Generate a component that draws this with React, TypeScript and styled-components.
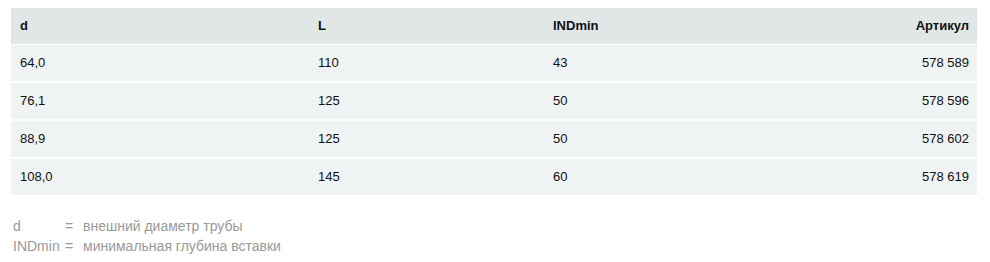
import React from 'react';
import styled, { createGlobalStyle } from 'styled-components';

const GlobalStyle = createGlobalStyle`
  body {
    margin: 0;
    background: #fff;
    font-family: "Liberation Sans", Arial, sans-serif;
  }
`;

const Page = styled.div`
  padding: 8px 13px 0 11px;
`;

const Table = styled.table`
  width: 966px;
  table-layout: fixed;
  border-collapse: collapse;
  font-size: 13px;
  color: #111;
`;

const HeadCell = styled.th<{ $right?: boolean; $width?: number }>`
  box-sizing: border-box;
  background: #e1e6e7;
  height: 36px;
  padding: 0 8px 0 9px;
  text-align: ${(p) => (p.$right ? 'right' : 'left')};
  font-weight: bold;
  width: ${(p) => (p.$width ? `${p.$width}px` : 'auto')};
  border-bottom: 1px solid #fff;
`;

const Row = styled.tr`
  background: #eff3f4;
  border-top: 2px solid #fff;
  &:first-child {
    border-top: none;
  }
`;

const Cell = styled.td<{ $right?: boolean }>`
  height: 36px;
  padding: 0 8px 0 9px;
  text-align: ${(p) => (p.$right ? 'right' : 'left')};
`;

const Legend = styled.div`
  margin-top: 21px;
  padding-left: 2px;
  font-size: 14px;
  line-height: 20px;
  color: #999;
`;

const LegendRow = styled.div`
  display: flex;
`;

const Term = styled.span`
  width: 52px;
`;

const Eq = styled.span`
  width: 18px;
`;

const rows = [
  ['64,0', '110', '43', '578 589'],
  ['76,1', '125', '50', '578 596'],
  ['88,9', '125', '50', '578 602'],
  ['108,0', '145', '60', '578 619'],
];

const App: React.FC = () => (
  <Page>
    <GlobalStyle />
    <Table>
      <thead>
        <tr>
          <HeadCell $width={298}>d</HeadCell>
          <HeadCell $width={235}>L</HeadCell>
          <HeadCell>INDmin</HeadCell>
          <HeadCell $right>Артикул</HeadCell>
        </tr>
      </thead>
      <tbody>
        {rows.map((r) => (
          <Row key={r[3]}>
            <Cell>{r[0]}</Cell>
            <Cell>{r[1]}</Cell>
            <Cell>{r[2]}</Cell>
            <Cell $right>{r[3]}</Cell>
          </Row>
        ))}
      </tbody>
    </Table>
    <Legend>
      <LegendRow>
        <Term>d</Term>
        <Eq>=</Eq>
        <span>внешний диаметр трубы</span>
      </LegendRow>
      <LegendRow>
        <Term>INDmin</Term>
        <Eq>=</Eq>
        <span>минимальная глубина вставки</span>
      </LegendRow>
    </Legend>
  </Page>
);

export default App;
